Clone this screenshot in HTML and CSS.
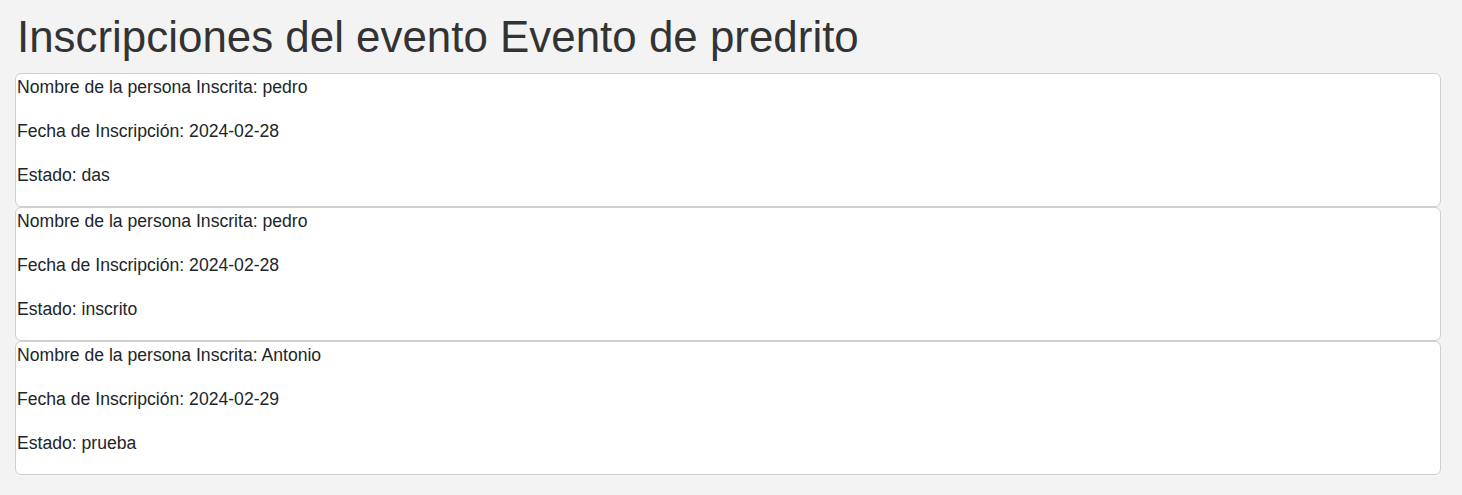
FILE: index.html
```html
<!DOCTYPE html>
<html lang="es">
<head>
<meta charset="utf-8">
<title>Inscripciones</title>
<link rel="stylesheet" href="styles.css">
</head>
<body>
<div class="page">
  <h1 class="title">Inscripciones del evento Evento de predrito</h1>
  <div class="list">
    <div class="card">
      <p>Nombre de la persona Inscrita: pedro</p>
      <p>Fecha de Inscripción: 2024-02-28</p>
      <p>Estado: das</p>
    </div>
    <div class="card">
      <p>Nombre de la persona Inscrita: pedro</p>
      <p>Fecha de Inscripción: 2024-02-28</p>
      <p>Estado: inscrito</p>
    </div>
    <div class="card">
      <p>Nombre de la persona Inscrita: Antonio</p>
      <p>Fecha de Inscripción: 2024-02-29</p>
      <p>Estado: prueba</p>
    </div>
  </div>
</div>
</body>
</html>
```

FILE: styles.css
```css
html, body {
  margin: 0;
  padding: 0;
  background: #f3f3f3;
}
body {
  font-family: "Liberation Sans", Arial, sans-serif;
  color: #212529;
  font-size: 16px;
  line-height: 1.5;
}
.page {
  padding: 0 21px 0 15px;
}
.title {
  font-size: 43.9px;
  line-height: 48px;
  font-weight: 400;
  color: #333333;
  margin: 13px 0 12px 2px;
}
.list {
  display: flex;
  flex-direction: column;
}
.card {
  background: #ffffff;
  border: 1px solid #cfcfcf;
  border-radius: 6px;
  padding: 0 0 0 1px;
}
.card p {
  font-size: 17.6px;
  line-height: 26.4px;
  margin: 0 0 17.6px;
}
```
